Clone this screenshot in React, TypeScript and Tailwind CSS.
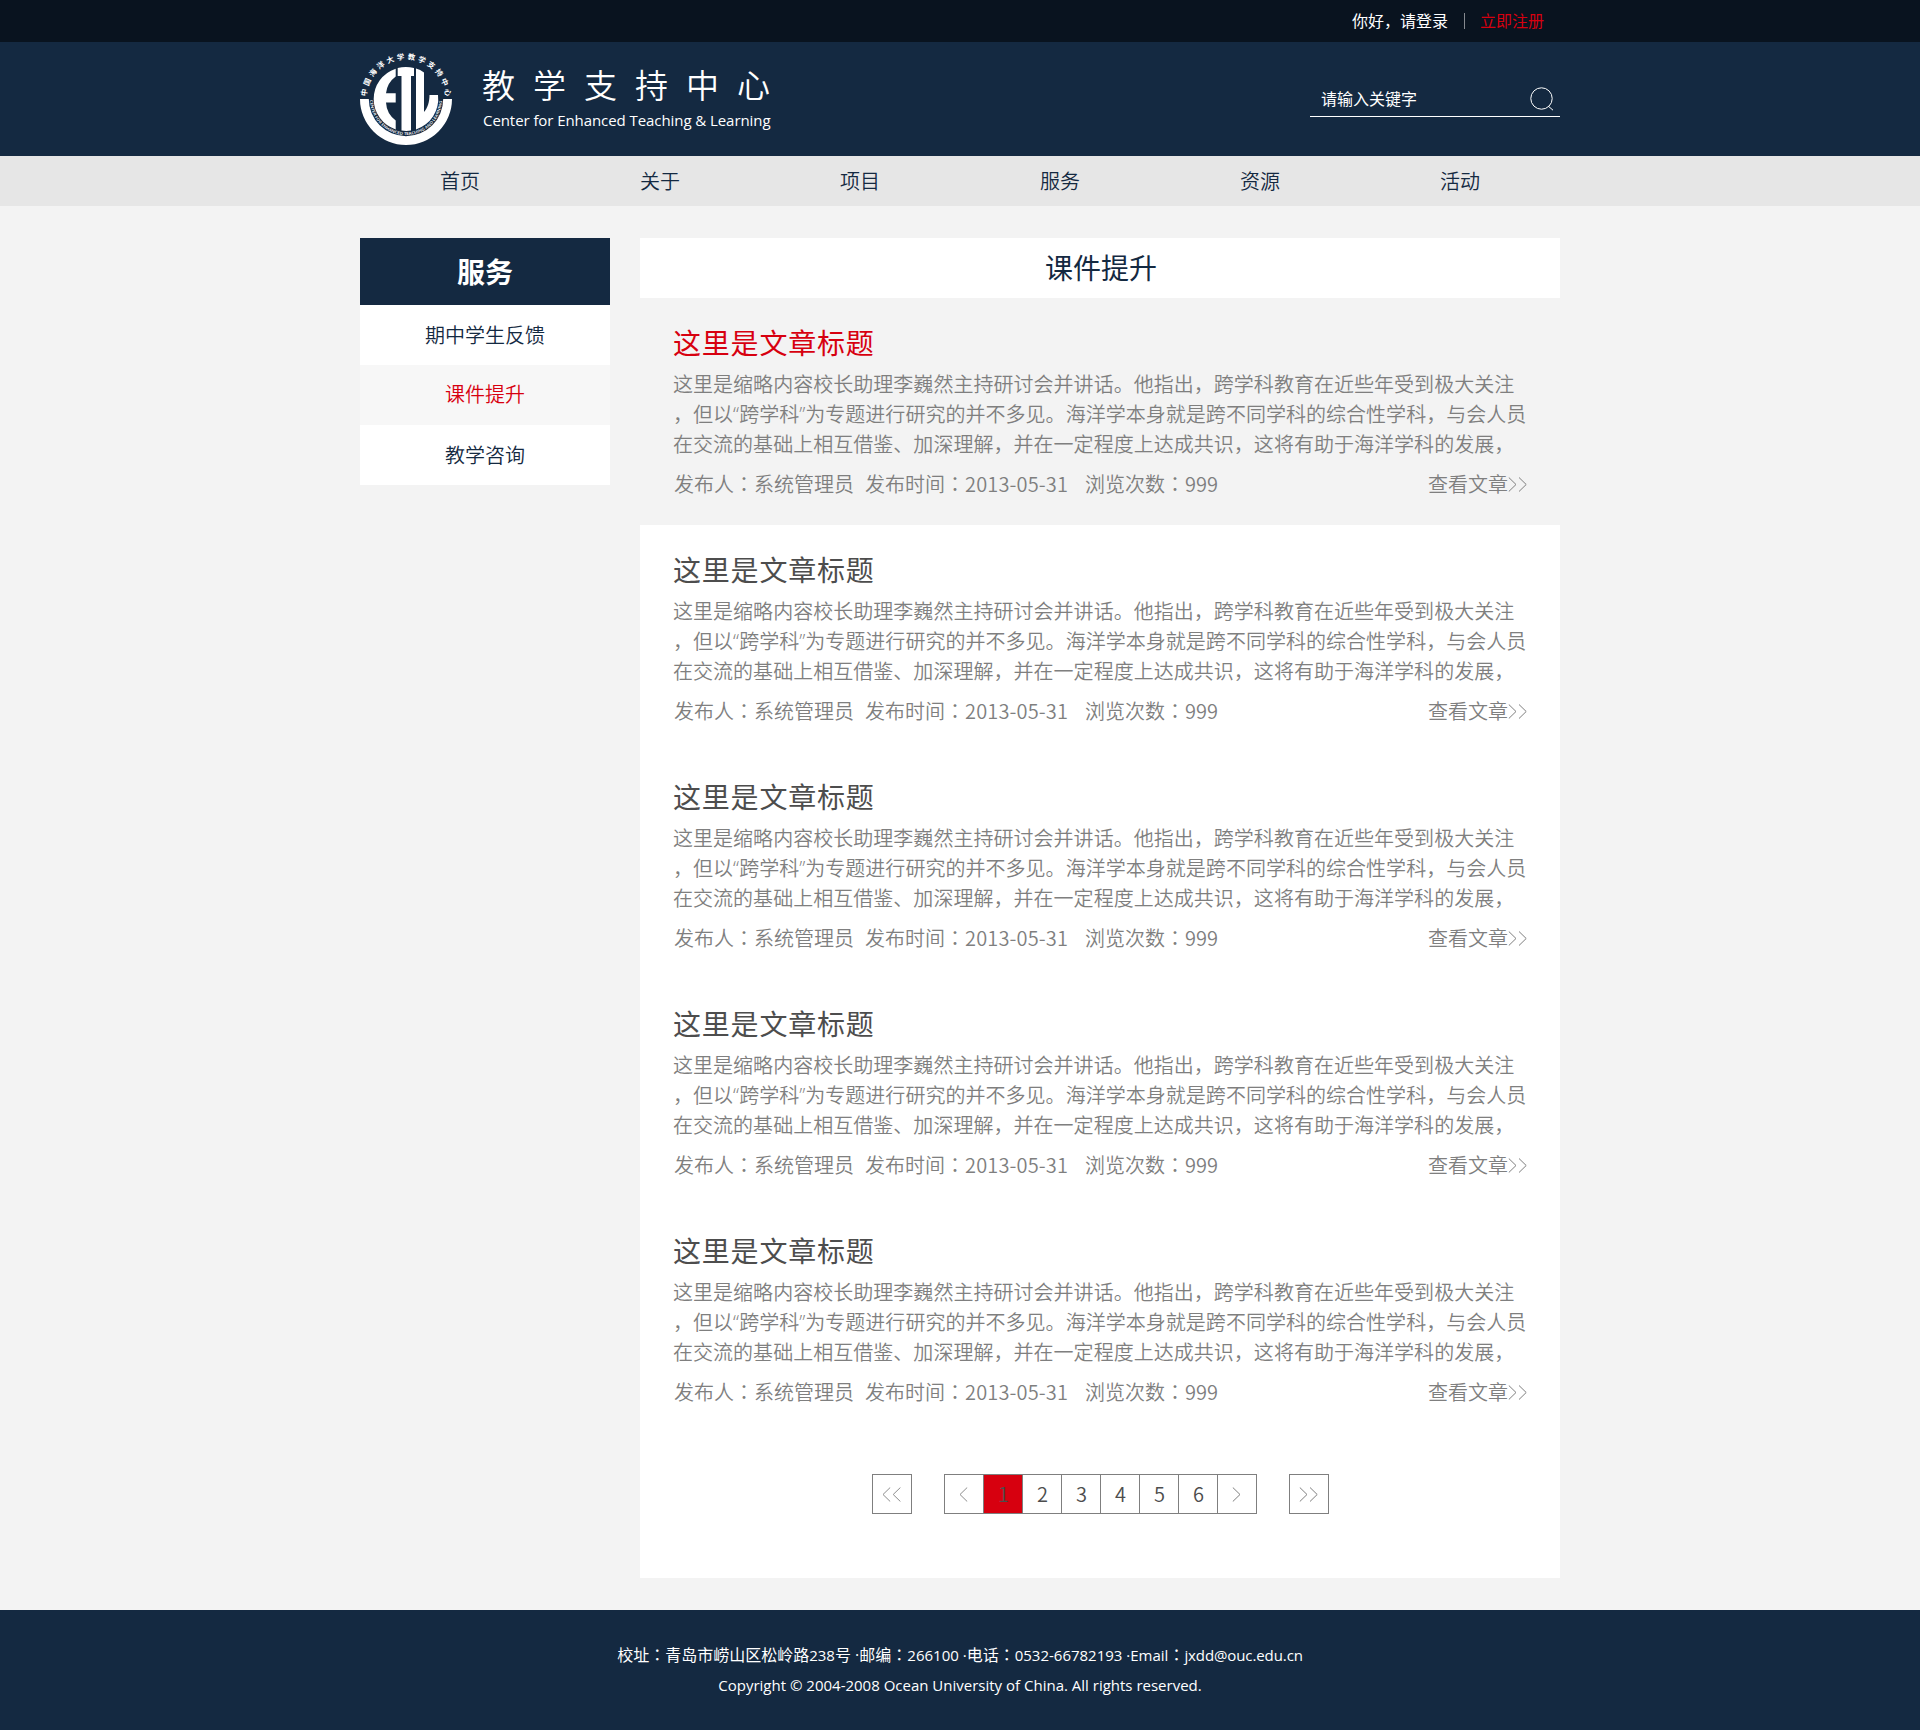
import React from "react";

const NAV_ITEMS = ["首页", "关于", "项目", "服务", "资源", "活动"];

const SIDE_ITEMS = [
  { label: "期中学生反馈", active: false },
  { label: "课件提升", active: true },
  { label: "教学咨询", active: false },
];

const EXCERPT = [
  "这里是缩略内容校长助理李巍然主持研讨会并讲话。他指出，跨学科教育在近些年受到极大关注",
  "，但以“跨学科”为专题进行研究的并不多见。海洋学本身就是跨不同学科的综合性学科，与会人员",
  "在交流的基础上相互借鉴、加深理解，并在一定程度上达成共识，这将有助于海洋学科的发展，",
];

const ARTICLES = [1, 2, 3, 4, 5].map((id) => ({
  id,
  title: "这里是文章标题",
  author: "系统管理员",
  date: "2013-05-31",
  views: 999,
  highlighted: id === 1,
}));

const RING_CHARS = Array.from("中国海洋大学教学支持中心");

/** Full-width colon centred in its cell. */
function Colon() {
  return (
    <span lang="zh-TW" className="font-['Noto_Sans_CJK_TC',sans-serif]">
      ：
    </span>
  );
}

function Chevrons({ dir, count, className }: { dir: "left" | "right"; count: 1 | 2; className?: string }) {
  const w = count === 2 ? 19 : 9;
  return (
    <svg
      width={w}
      height="15"
      viewBox={`0 0 ${w} 15`}
      fill="none"
      stroke="currentColor"
      strokeWidth="1"
      className={className}
    >
      {dir === "right" ? <path d="M.8.5 8 7.5.8 14.5" /> : <path d="M8.2.5 1 7.5 8.2 14.5" />}
      {count === 2 && (dir === "right" ? <path d="M11 .5 18.2 7.5 11 14.5" /> : <path d="M18.4.5 11.2 7.5 18.4 14.5" />)}
    </svg>
  );
}

function Logo() {
  return (
    <svg width="92" height="92" viewBox="10 13 92 92" className="shrink-0 overflow-visible" fill="#fff">
      <defs>
        <path id="ring-baseline" d="M20 59 A36 36 0 0 0 92 59" />
      </defs>
      <path d="M10 59 A46 46 0 0 0 102 59 H93.2 A37.2 37.2 0 0 1 18.8 59 Z" />
      <path d="M45.7 28.7 A32 32 0 0 0 45.7 89.5 V80.5 A24 24 0 0 1 36 62.5 H45.7 V53.3 H36 A24 24 0 0 1 45.7 36.5 Z" />
      <path d="M47.7 28 A32 32 0 0 1 64 28 V36 H61 V90.6 A32 32 0 0 1 51.5 90.6 V36 H47.7 Z" />
      <path d="M66 28.6 A32 32 0 0 1 74 32.4 V72 C77.5 68 79.5 62 79.5 55 H88 A32 32 0 0 1 66 89.4 Z" />
      {RING_CHARS.map((ch, i) => (
        <text
          key={i}
          x="56"
          y="19.4"
          textAnchor="middle"
          fontSize="7.4"
          fontWeight="700"
          fontFamily="'Noto Sans CJK SC', sans-serif"
          transform={`rotate(${-81 + (i * 162) / 11} 56 59)`}
        >
          {ch}
        </text>
      ))}
      <text fontSize="3.9" fontWeight="600" fontFamily="'Open Sans', sans-serif">
        <textPath href="#ring-baseline" startOffset="1" textLength="110" lengthAdjust="spacingAndGlyphs">
          CENTER FOR ENHANCED TEACHING AND LEARNING
        </textPath>
      </text>
    </svg>
  );
}

function TopBar() {
  return (
    <div className="h-[42px] bg-[#09131f]">
      <div className="mx-auto flex h-full w-[1200px] items-center justify-end pr-4 text-base leading-6">
        <span className="text-white">你好，请登录</span>
        <span className="ml-4 mr-[15px] h-4 w-px bg-[#85898f]" />
        <a className="text-[#d7000f]">立即注册</a>
      </div>
    </div>
  );
}

function Header() {
  return (
    <header className="h-[114px] bg-[#142941] text-white">
      <div className="mx-auto flex h-full w-[1200px] items-center">
        <Logo />
        <div className="ml-[30px] pb-1">
          <h1 className="text-[33px] font-[350] leading-[46px] tracking-[18px]">教学支持中心</h1>
          <p className="ml-px text-[15px] leading-[22px] tracking-[-0.07px]">Center for Enhanced Teaching &amp; Learning</p>
        </div>
        <div className="ml-auto flex h-9 w-[250px] items-center justify-between border-b border-white pl-[11px] pr-[6px]">
          <span className="text-base leading-6">请输入关键字</span>
          <svg width="24" height="24" viewBox="0 0 24 24" fill="none" stroke="#fff" strokeWidth="1">
            <circle cx="11.5" cy="11.5" r="10.7" />
            <path d="M18.6 19.4 23 23.2" />
          </svg>
        </div>
      </div>
    </header>
  );
}

function NavBar() {
  return (
    <nav className="h-[50px] bg-[#e6e6e6]">
      <ul className="mx-auto grid h-full w-[1200px] grid-cols-6 items-center pt-px text-center text-xl font-[350] leading-[30px] text-[#142941]">
        {NAV_ITEMS.map((item) => (
          <li key={item}>{item}</li>
        ))}
      </ul>
    </nav>
  );
}

function Sidebar() {
  return (
    <aside className="w-[250px] shrink-0 text-center">
      <h2 className="flex h-[67px] items-center justify-center bg-[#142941] text-[28px] font-bold text-white">服务</h2>
      <ul className="text-xl font-[350] text-[#142941]">
        {SIDE_ITEMS.map((item) => (
          <li
            key={item.label}
            className={`flex h-[60px] items-center justify-center ${item.active ? "bg-[#f7f7f7] text-[#d7000f]" : "bg-white pt-0.5"}`}
          >
            {item.label}
          </li>
        ))}
      </ul>
    </aside>
  );
}

function Article({ article }: { article: (typeof ARTICLES)[number] }) {
  return (
    <article
      className={`h-[227px] pl-[34px] pr-[33px] pt-[25px] text-xl font-[350] leading-[30px] text-[#7f7f7f] ${article.highlighted ? "bg-[#f3f3f3]" : "bg-white"}`}
    >
      <h3
        className={`-ml-px text-[28px] font-normal leading-10 tracking-[0.8px] ${article.highlighted ? "text-[#d7000f]" : "text-[#4d4d4d]"}`}
      >
        {article.title}
      </h3>
      <div className="mt-[7px]">
        {EXCERPT.map((line) => (
          <p key={line} className="-ml-px whitespace-nowrap tracking-[0.03px]">
            {line}
          </p>
        ))}
      </div>
      <div className="mt-[9px] flex items-center whitespace-nowrap">
        <span>
          发布人
          <Colon />
          {article.author}
        </span>
        <span className="ml-[11px]">
          发布时间
          <Colon />
          <span className="font-['Noto_Sans_CJK_SC',sans-serif] tracking-[0.15px]">{article.date}</span>
        </span>
        <span className="ml-[17px]">
          浏览次数
          <Colon />
          <span className="font-['Noto_Sans_CJK_SC',sans-serif]">{article.views}</span>
        </span>
        <a className="ml-auto flex items-center">
          查看文章
          <Chevrons dir="right" count={2} />
        </a>
      </div>
    </article>
  );
}

function Pagination() {
  return (
    <div className="flex justify-center font-['Noto_Sans_CJK_SC',sans-serif] text-xl font-[350] text-[#4d4d4d]">
      <a className="flex size-10 items-center justify-center border border-[#7f7f7f] text-[#8c8c8c]">
        <Chevrons dir="left" count={2} />
      </a>
      <div className="mx-8 flex h-10 border border-r-0 border-[#7f7f7f]">
        <a className="flex w-[39px] items-center justify-center border-r border-[#7f7f7f] text-[#8c8c8c]">
          <Chevrons dir="left" count={1} />
        </a>
        {[1, 2, 3, 4, 5, 6].map((n) => (
          <a
            key={n}
            className={`flex w-[39px] items-center justify-center border-r border-[#7f7f7f] pl-0.5 ${n === 1 ? "bg-[#d7000f]" : ""}`}
          >
            {n}
          </a>
        ))}
        <a className="flex w-[39px] items-center justify-center border-r border-[#7f7f7f] text-[#7f7f7f]">
          <Chevrons dir="right" count={1} />
        </a>
      </div>
      <a className="flex size-10 items-center justify-center border border-[#7f7f7f] text-[#7f7f7f]">
        <Chevrons dir="right" count={2} />
      </a>
    </div>
  );
}

function Footer() {
  return (
    <footer className="h-[120px] bg-[#142941] pt-[29px] text-center text-[15px] leading-[30px] text-white">
      <p>
        <span className="text-base leading-[30px]">
          校址
          <Colon />
          青岛市崂山区松岭路
        </span>
        238<span className="text-base leading-[30px]">号 ·邮编<Colon /></span>
        266100 ·<span className="text-base leading-[30px]">电话<Colon /></span>
        0532-66782193 ·Email<span className="text-base leading-[30px]"><Colon /></span>
        <span className="tracking-[-0.1px]">jxdd@ouc.edu.cn</span>
      </p>
      <p>Copyright © 2004-2008 Ocean University of China. All rights reserved.</p>
    </footer>
  );
}

export default function App() {
  return (
    <div
      lang="zh-CN"
      className="flex min-h-[1730px] flex-col bg-[#f3f3f3] font-['Open_Sans','Noto_Sans_CJK_SC',sans-serif]"
    >
      <TopBar />
      <Header />
      <NavBar />
      <div className="mx-auto mb-8 mt-8 flex w-[1200px] items-start gap-[30px]">
        <Sidebar />
        <main className="w-[920px]">
          <h2 className="flex h-[60px] items-center justify-center bg-white pl-0.5 text-[28px] text-[#142941]">课件提升</h2>
          {ARTICLES.map((a) => (
            <Article key={a.id} article={a} />
          ))}
          <div className="h-[145px] bg-white pt-[41px]">
            <Pagination />
          </div>
        </main>
      </div>
      <Footer />
    </div>
  );
}
